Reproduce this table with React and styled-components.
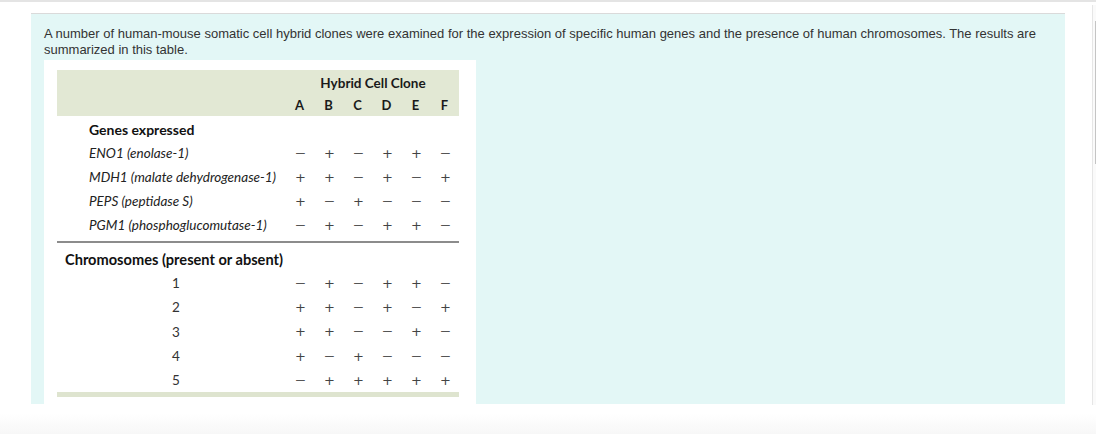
import React from "react";
import styled, { createGlobalStyle } from "styled-components";

const GlobalStyle = createGlobalStyle`
  html, body {
    margin: 0;
    padding: 0;
    background: #fff;
  }
  body {
    font-family: "Liberation Sans", Arial, sans-serif;
  }
`;

const genes = [
  { name: "ENO1", desc: "enolase-1", values: "-+-++-" },
  { name: "MDH1", desc: "malate dehydrogenase-1", values: "++-+-+" },
  { name: "PEPS", desc: "peptidase S", values: "+-+---" },
  { name: "PGM1", desc: "phosphoglucomutase-1", values: "-+-++-" },
];

const chromosomes = [
  { label: "1", values: "-+-++-" },
  { label: "2", values: "++-+-+" },
  { label: "3", values: "++--+-" },
  { label: "4", values: "+-+---" },
  { label: "5", values: "-+++++" },
];

const clones = ["A", "B", "C", "D", "E", "F"];

const Sign = ({ value }) =>
  value === "+" ? <Plus>+</Plus> : <Minus>—</Minus>;

const App = () => {
  return (
    <>
      <GlobalStyle />
      <Page>
        <TopRule />
        <Body>
          <Main>
            <Panel>
              <Intro>
                A number of human-mouse somatic cell hybrid clones were examined
                for the expression of specific human genes and the presence of
                human chromosomes. The results are summarized in this table.
              </Intro>
              <Figure>
                <HeaderBand>
                  <GroupTitle>Hybrid Cell Clone</GroupTitle>
                  {clones.map((c, i) => (
                    <CloneLetter key={c} col={i + 2}>
                      {c}
                    </CloneLetter>
                  ))}
                </HeaderBand>

                <SectionTitle indent={32}>Genes expressed</SectionTitle>
                {genes.map((g) => (
                  <Row key={g.name}>
                    <GeneLabel>
                      {g.name} (<em>{g.desc}</em>)
                    </GeneLabel>
                    {g.values.split("").map((v, i) => (
                      <Cell key={i}>
                        <Sign value={v} />
                      </Cell>
                    ))}
                  </Row>
                ))}

                <Divider />

                <SectionTitle indent={8} wide>
                  Chromosomes (present or absent)
                </SectionTitle>
                {chromosomes.map((c) => (
                  <Row key={c.label} tall>
                    <NumberLabel>{c.label}</NumberLabel>
                    {c.values.split("").map((v, i) => (
                      <Cell key={i}>
                        <Sign value={v} />
                      </Cell>
                    ))}
                  </Row>
                ))}
                <BottomRule />
              </Figure>
            </Panel>
          </Main>
          <Rail>
            <Thumb />
          </Rail>
        </Body>
        <Footer />
      </Page>
    </>
  );
};

const Page = styled.div`
  display: flex;
  flex-direction: column;
  width: 1096px;
  height: 434px;
  overflow: hidden;
`;

const TopRule = styled.div`
  height: 2px;
  background: #e4e4e4;
  flex-shrink: 0;
`;

const Body = styled.div`
  display: flex;
  height: 403px;
  flex-shrink: 0;
`;

const Main = styled.div`
  flex: 1;
  padding: 11px 0 0 31px;
`;

const Panel = styled.section`
  width: 1034px;
  height: 391px;
  box-sizing: border-box;
  border-top: 1px solid #dadada;
  background: #e3f7f6;
  padding: 12px 13px 0 13px;
  display: flex;
  flex-direction: column;
`;

const Intro = styled.p`
  margin: 0;
  font-family: "Liberation Sans", Arial, sans-serif;
  font-size: 13px;
  line-height: 15.5px;
  color: #333;
  padding-right: 8px;
`;

const Figure = styled.div`
  width: 432px;
  flex: 1;
  margin-top: 3px;
  background: #fff;
  box-sizing: border-box;
  padding: 10px 17px 0 13px;
  font-family: Lato, "Open Sans", sans-serif;
  color: #222;
`;

const cols = `229px repeat(6, 29px)`;

const HeaderBand = styled.div`
  display: grid;
  grid-template-columns: ${cols};
  grid-template-rows: 22px 22px;
  align-items: center;
  height: 46px;
  box-sizing: border-box;
  padding-top: 2px;
  background: #e2e8d4;
`;

const GroupTitle = styled.div`
  grid-column: 2 / span 6;
  grid-row: 1;
  text-align: center;
  font-weight: 700;
  font-size: 13.5px;
  color: #1a1a1a;
`;

const CloneLetter = styled.div`
  grid-row: 2;
  grid-column: ${(p) => p.col};
  text-align: center;
  font-weight: 700;
  font-size: 13px;
  color: #1a1a1a;
  padding-right: 2px;
`;

const SectionTitle = styled.div`
  height: 22px;
  line-height: 22px;
  margin-top: ${(p) => (p.wide ? 6 : 3)}px;
  padding-left: ${(p) => p.indent}px;
  font-weight: 700;
  font-size: ${(p) => (p.wide ? 14.6 : 14)}px;
  color: #111;
`;

const Row = styled.div`
  display: grid;
  grid-template-columns: ${cols};
  align-items: center;
  height: ${(p) => (p.tall ? "24.3px" : "24px")};
`;

const GeneLabel = styled.div`
  padding-left: 32px;
  font-size: 13.5px;
  font-style: italic;
  color: #222;
  white-space: nowrap;

  em {
    font-style: italic;
  }
`;

const NumberLabel = styled.div`
  padding-left: 115px;
  font-size: 13.5px;
  color: #333;
`;

const Cell = styled.div`
  display: flex;
  justify-content: center;
  align-items: center;
  height: 100%;
`;

const Plus = styled.span`
  font-family: "DejaVu Sans", sans-serif;
  font-size: 13px;
  line-height: 1;
  color: #444;
`;

const Minus = styled.span`
  font-family: Lato, sans-serif;
  font-size: 13px;
  line-height: 1;
  color: #555;
`;

const Divider = styled.div`
  height: 2px;
  margin-top: 4px;
  background: #8c8c8c;
`;

const BottomRule = styled.div`
  height: 5px;
  background: #dee4cf;
`;

const Rail = styled.div`
  width: 4px;
  margin-top: 3px;
  border-left: 1px solid #e6e6e6;
  background: #fafafa;
  display: flex;
  justify-content: flex-end;
  padding-top: 16px;
  box-sizing: border-box;
`;

const Thumb = styled.div`
  width: 1px;
  height: 143px;
  background: #c4c4c4;
`;

const Footer = styled.div`
  flex: 1;
  background: linear-gradient(#ffffff 0%, #ffffff 30%, #f7f7f7 100%);
`;

export default App;
